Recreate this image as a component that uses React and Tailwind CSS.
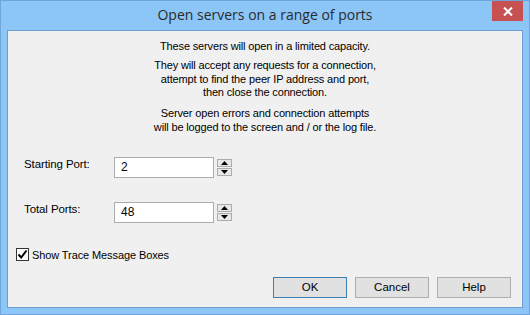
import React from 'react';

const ui = { fontFamily: '"Liberation Sans", Arial, sans-serif' };

const Spinner = () => (
  <div className="flex flex-col gap-[1px] mt-[2px] ml-[3px]">
    <div className="w-[15px] h-[8px] border border-[#acacac] bg-[#e8e8e8] flex items-center justify-center">
      <svg width="7" height="4" viewBox="0 0 7 4"><path d="M3.5 0 L7 4 L0 4 Z" fill="#000" /></svg>
    </div>
    <div className="w-[15px] h-[8px] border border-[#acacac] bg-[#e8e8e8] flex items-center justify-center">
      <svg width="7" height="4" viewBox="0 0 7 4"><path d="M0 0 L7 0 L3.5 4 Z" fill="#000" /></svg>
    </div>
  </div>
);

const PortRow = ({ label, value }) => (
  <div className="flex items-start">
    <div className="w-[90px] pl-[16px] leading-[14px] text-[11.5px] tracking-[-0.1px] text-black box-content">{label}</div>
    <div className="w-[100px] h-[21px] border border-[#acacac] bg-white flex items-center pl-[6px] text-[12px] text-black">{value}</div>
    <Spinner />
  </div>
);

const DlgButton = ({ children, focused }) => (
  <button
    className={`w-[74px] h-[21px] border text-[11.5px] text-black bg-[#e1e1e1] ${focused ? 'border-[#3c7fb1]' : 'border-[#adadad]'}`}
    style={ui}
  >
    {children}
  </button>
);

export default function App() {
  return (
    <div
      className="w-[530px] h-[315px] bg-[#8bc6f7] border border-[#6ea5da] flex flex-col pt-[29px] px-[6px] pb-[6px] relative"
      style={ui}
    >
      {/* title bar */}
      <div className="absolute top-0 left-0 right-0 h-[29px] flex items-center justify-center">
        <span className="text-[14px] text-[#2b2b2b] -mt-[2px]" style={{ fontFamily: '"Open Sans", "Noto Sans", sans-serif' }}>
          Open servers on a range of ports
        </span>
      </div>
      <div className="absolute top-0 right-[6px] w-[31px] h-[20px] bg-[#c75050] flex items-center justify-center">
        <svg width="10" height="9" viewBox="0 0 10 9">
          <path d="M1 0.5 L9 8.5 M9 0.5 L1 8.5" stroke="#fff" strokeWidth="2" />
        </svg>
      </div>

      {/* client area */}
      <div className="flex-1 bg-[#f0f0f0] border border-[#6f9fd2] flex flex-col">
        <div className="pt-[8px] text-center text-[11px] tracking-[-0.15px] text-black">
          <p className="leading-[14px]">These servers will open in a limited capacity.</p>
          <p className="leading-[13.5px] mt-[6px]">
            They will accept any requests for a connection,<br />
            attempt to find the peer IP address and port,<br />
            then close the connection.
          </p>
          <p className="leading-[14px] mt-[6px]">
            Server open errors and connection attempts<br />
            will be logged to the screen and / or the log file.
          </p>
        </div>

        <div className="mt-[23px]">
          <PortRow label="Starting Port:" value="2" />
        </div>
        <div className="mt-[24px]">
          <PortRow label="Total Ports:" value="48" />
        </div>

        <div className="mt-[25px] ml-[8px] flex items-center gap-[3px]">
          <div className="w-[13px] h-[13px] border border-[#333] bg-white flex items-center justify-center">
            <svg width="11" height="11" viewBox="0 0 11 11">
              <path d="M1.5 5.5 L4.2 8.5 L9.5 1.5" stroke="#000" strokeWidth="2" fill="none" />
            </svg>
          </div>
          <span className="text-[11px] tracking-[-0.1px] text-black leading-[14px]">Show Trace Message Boxes</span>
        </div>

        <div className="mt-auto flex justify-end gap-[8px] pr-[11px] pb-[9px]">
          <DlgButton focused>OK</DlgButton>
          <DlgButton>Cancel</DlgButton>
          <DlgButton>Help</DlgButton>
        </div>
      </div>
    </div>
  );
}
